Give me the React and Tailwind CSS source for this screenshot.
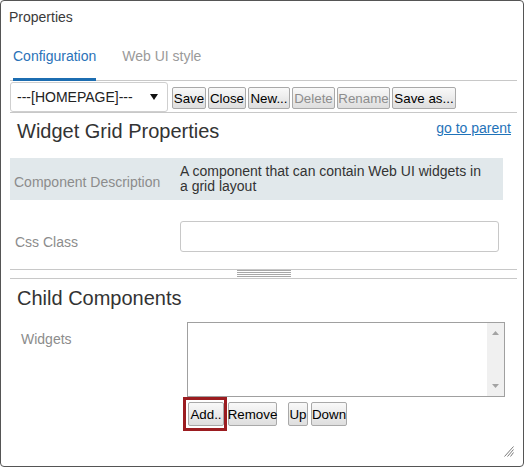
import React from 'react';

const Btn = ({ children, w, disabled, h = 'h-[22px]' }) => (
    <button
        className={`${w} ${h} flex items-center justify-center border border-[#a9a9a9] rounded-[2px] bg-gradient-to-b from-[#f9f9f9] to-[#dedede] text-[13.333px] leading-[15px] ${disabled ? 'text-[#8d8d8d]' : 'text-black'}`}
    >
        {children}
    </button>
);

const App = () => {
    return (
        <div className="w-[524px] h-[467px] border border-[#555] rounded-[4px] relative bg-white font-['Liberation_Sans',Arial,sans-serif] text-[14px] leading-[16px] text-[#333]">
            <div className="pl-[8px] pt-[8px] leading-[16px] text-[#3a3a3a]">Properties</div>

            <div className="ml-[9px] w-[507px]">
                {/* tabs */}
                <div className="flex border-b border-[#c8c8c8]">
                    <div className="ml-[3px] pt-[23px] pb-[14px] border-b-[3px] border-[#1c6db1] mb-[-1px] text-[#2a72b8]">Configuration</div>
                    <div className="ml-[26px] pt-[23px] pb-[14px] border-b-[3px] border-transparent mb-[-1px] text-[#9a9a9a]">Web UI style</div>
                </div>

                {/* toolbar */}
                <div className="flex items-start h-[32px] pt-[1px] border-b border-[#c8c8c8]">
                    <div className="w-[158px] h-[30px] border border-[#cfcfcf] rounded-[3px] flex items-center justify-between pl-[6px] pr-[9px] text-[#222]">
                        <span>---[HOMEPAGE]---</span>
                        <svg width="8" height="6" viewBox="0 0 8 6"><polygon points="0,0 8,0 4,6" fill="#111" /></svg>
                    </div>
                    <div className="flex gap-[2px] ml-[4px] mt-[5px]">
                        <Btn w="w-[34px]">Save</Btn>
                        <Btn w="w-[38px]">Close</Btn>
                        <Btn w="w-[42px]">New...</Btn>
                        <Btn w="w-[43px]" disabled>Delete</Btn>
                        <Btn w="w-[53px]" disabled>Rename</Btn>
                        <Btn w="w-[64px]">Save as...</Btn>
                    </div>
                </div>

                {/* widget grid properties */}
                <div className="flex justify-between items-start pt-[7px]">
                    <div className="pl-[7px] text-[20px] leading-[23px] text-[#333]">Widget Grid Properties</div>
                    <a className="mt-[0px] mr-[6px] text-[#1f73b9] underline">go to parent</a>
                </div>

                <div className="mt-[15px] w-[493px] h-[42px] bg-[#e1e8eb] flex">
                    <div className="w-[170px] pl-[4px] pt-[17px] leading-[15px] text-[#8c8c8c]">Component Description</div>
                    <div className="w-[311px] pt-[6px] leading-[15px] text-[#333]">A component that can contain Web UI widgets in a grid layout</div>
                </div>

                <div className="mt-[21px] flex">
                    <div className="w-[170px] pl-[5px] pt-[14px] leading-[15px] text-[#8c8c8c]">Css Class</div>
                    <div className="w-[319px] h-[31px] border border-[#c8c8c8] rounded-[3px]" />
                </div>

                {/* splitter */}
                <div className="mt-[17px] h-[10px] border-y border-[#c8c8c8] flex justify-center">
                    <div className="w-[54px] flex flex-col gap-px">
                        <div className="h-px bg-[#a8a8a8]" />
                        <div className="h-px bg-[#a8a8a8]" />
                        <div className="h-px bg-[#a8a8a8]" />
                        <div className="h-px bg-[#a8a8a8]" />
                    </div>
                </div>

                {/* child components */}
                <div className="pt-[8px] pl-[7px] text-[20px] leading-[23px] text-[#333]">Child Components</div>

                <div className="mt-[12px] flex">
                    <div className="w-[177px] pl-[11px] pt-[10px] leading-[15px] text-[#8c8c8c]">Widgets</div>
                    <div className="w-[318px]">
                        <div className="h-[75px] border border-[#a0a0a0] flex justify-end">
                            <div className="w-[17px] h-full bg-[#f0f0f0] flex flex-col justify-between items-center py-[8px]">
                                <svg width="7" height="4" viewBox="0 0 7 4"><polygon points="0,4 7,4 3.5,0" fill="#a3a3a3" /></svg>
                                <svg width="7" height="4" viewBox="0 0 7 4"><polygon points="0,0 7,0 3.5,4" fill="#a3a3a3" /></svg>
                            </div>
                        </div>
                        <div className="flex items-start ml-[-4px]">
                            <div className="border-[3px] border-[#9b1c20] pl-[2px] pt-[2px] pb-[2px]">
                                <Btn w="w-[36px]" h="h-[24px]">Add..</Btn>
                            </div>
                            <div className="flex mt-[5px]">
                                <div className="ml-[1px]"><Btn w="w-[49px]" h="h-[24px]">Remove</Btn></div>
                                <div className="ml-[11px]"><Btn w="w-[20px]" h="h-[24px]">Up</Btn></div>
                                <div className="ml-[3px]"><Btn w="w-[36px]" h="h-[24px]">Down</Btn></div>
                            </div>
                        </div>
                    </div>
                </div>
            </div>

            {/* resize grip */}
            <svg className="absolute right-[9px] bottom-[9px]" width="10" height="11" viewBox="0 0 10 11">
                <line x1="0.5" y1="10.5" x2="9.5" y2="0.5" stroke="#7a7a7a" strokeWidth="1" />
                <line x1="3.5" y1="10.5" x2="9.5" y2="3.5" stroke="#7a7a7a" strokeWidth="1" />
                <line x1="6.5" y1="10.5" x2="9.5" y2="6.5" stroke="#7a7a7a" strokeWidth="1" />
            </svg>
        </div>
    );
};

export default App;
